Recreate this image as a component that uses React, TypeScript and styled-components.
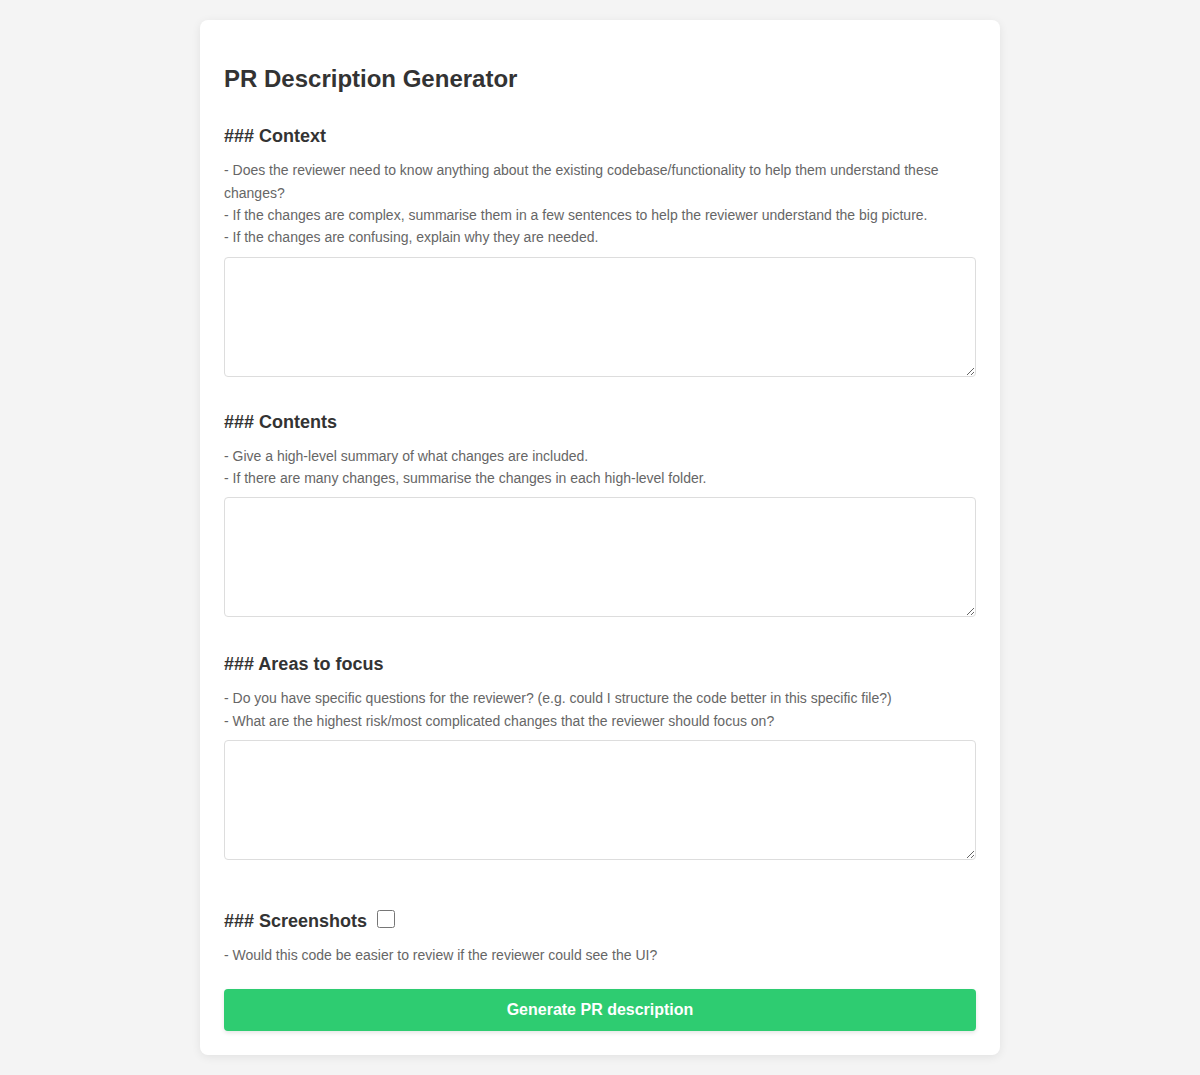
import * as React from 'react';
import styled, { createGlobalStyle } from 'styled-components';

const GlobalStyle = createGlobalStyle`
  body {
    margin: 0;
    background: #f4f4f4;
    font-family: "Liberation Sans", Arial, sans-serif;
    line-height: 1.6;
    color: #333;
  }
`;

const Card = styled.div`
  width: 800px;
  box-sizing: border-box;
  margin: 20px auto;
  padding: 40px 24px 24px;
  background: #fff;
  border-radius: 8px;
  box-shadow: 0 2px 10px rgba(0, 0, 0, 0.08);
`;

const Title = styled.h1`
  margin: 0 0 24px;
  font-size: 24px;
  font-weight: bold;
  color: #333;
`;

const Section = styled.div<{ $gap?: number }>`
  margin-bottom: ${(p) => p.$gap ?? 30}px;
`;

const Heading = styled.h3`
  display: flex;
  align-items: center;
  gap: 10px;
  margin: 0 0 8px;
  font-size: 18px;
  font-weight: bold;
  color: #333;
`;

const Hint = styled.p`
  margin: 0 0 8px;
  font-size: 14px;
  color: #666;
`;

const Field = styled.textarea`
  display: block;
  width: 100%;
  height: 120px;
  box-sizing: border-box;
  padding: 10px;
  border: 1px solid #ddd;
  border-radius: 4px;
  font-family: inherit;
  font-size: 14px;
  resize: vertical;
`;

const Check = styled.input`
  width: 18px;
  height: 18px;
  margin: 0 0 4px;
`;

const Button = styled.button`
  display: block;
  width: 100%;
  height: 42px;
  border: none;
  border-radius: 4px;
  background: #2ecc71;
  color: #fff;
  font-family: inherit;
  font-size: 16px;
  font-weight: bold;
  cursor: pointer;
  box-shadow: 0 2px 4px rgba(0, 0, 0, 0.1);
`;

const sections = [
  {
    title: '### Context',
    gap: 31,
    hints: [
      '- Does the reviewer need to know anything about the existing codebase/functionality to help them understand these changes?',
      '- If the changes are complex, summarise them in a few sentences to help the reviewer understand the big picture.',
      '- If the changes are confusing, explain why they are needed.',
    ],
  },
  {
    title: '### Contents',
    gap: 33,
    hints: [
      '- Give a high-level summary of what changes are included.',
      '- If there are many changes, summarise the changes in each high-level folder.',
    ],
  },
  {
    title: '### Areas to focus',
    gap: 47,
    hints: [
      '- Do you have specific questions for the reviewer? (e.g. could I structure the code better in this specific file?)',
      '- What are the highest risk/most complicated changes that the reviewer should focus on?',
    ],
  },
];

export default function App() {
  return (
    <>
      <GlobalStyle />
      <Card>
        <Title>PR Description Generator</Title>
        {sections.map((s) => (
          <Section key={s.title} $gap={s.gap}>
            <Heading>{s.title}</Heading>
            <Hint>
              {s.hints.map((h, j) => (
                <React.Fragment key={j}>
                  {j > 0 && <br />}
                  {h}
                </React.Fragment>
              ))}
            </Hint>
            <Field />
          </Section>
        ))}
        <Section $gap={23}>
          <Heading>
            ### Screenshots <Check type="checkbox" />
          </Heading>
          <Hint>- Would this code be easier to review if the reviewer could see the UI?</Hint>
        </Section>
        <Button>Generate PR description</Button>
      </Card>
    </>
  );
}
